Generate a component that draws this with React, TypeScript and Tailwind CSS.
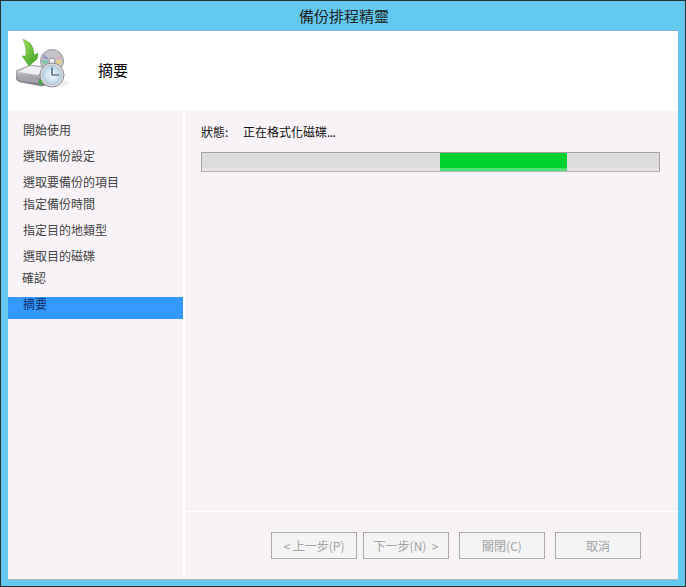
import React from 'react';

const font = { fontFamily: '"Noto Sans CJK TC", "Noto Sans", sans-serif' };

interface StepItem {
  label: string;
  rowClass: string;
}

const steps: StepItem[] = [
  { label: '開始使用', rowClass: 'mt-[11px] pl-[15px] leading-[16px]' },
  { label: '選取備份設定', rowClass: 'mt-[4px] pl-[15px] leading-[16px]' },
  { label: '選取要備份的項目', rowClass: 'mt-[4px] pl-[15px] leading-[16px]' },
  { label: '指定備份時間', rowClass: 'pl-[15px] leading-[16px]' },
  { label: '指定目的地類型', rowClass: 'mt-[4px] pl-[15px] leading-[16px]' },
  { label: '選取目的磁碟', rowClass: 'mt-[4px] pl-[15px] leading-[16px]' },
  { label: '確認', rowClass: 'pl-[14px] leading-[16px]' },
  { label: '摘要', rowClass: 'mt-[5px] pl-[15px] leading-[14px] bg-[#3399ff] text-[#0b2c66]' },
];

const BackupIcon = () => (
  <svg width="54" height="50" viewBox="0 0 54 50" className="shrink-0 self-start mt-[8px]">
    <defs>
      <linearGradient id="arrow" x1="0" y1="0" x2="1" y2="1">
        <stop offset="0" stopColor="#a6e05a" />
        <stop offset="1" stopColor="#2f9e22" />
      </linearGradient>
      <linearGradient id="drive" x1="0" y1="0" x2="0" y2="1">
        <stop offset="0" stopColor="#e6e4ea" />
        <stop offset="1" stopColor="#77757f" />
      </linearGradient>
      <radialGradient id="face" cx="0.5" cy="0.5" r="0.5">
        <stop offset="0" stopColor="#f4f9fc" />
        <stop offset="1" stopColor="#b9d3e4" />
      </radialGradient>
    </defs>
    <ellipse cx="38" cy="44" rx="15" ry="4" fill="#eeeeee" />
    <circle cx="36" cy="22" r="11.5" fill="#c4c3c8" stroke="#9a99a0" />
    <path d="M26 21 L32 21.5 L32.5 23.5 L27 26 Z" fill="#7fc8a8" />
    <path d="M28 15 L32.5 19.5 L31.5 20.5 L26.5 19.5 Z" fill="#9d97c8" />
    <path d="M46 21 L40 21.5 L39.5 23.5 L45 26 Z" fill="#e2d48c" />
    <path d="M44 15 L39.5 19.5 L40.5 20.5 L45.5 19.5 Z" fill="#d9abc4" />
    <circle cx="36" cy="22" r="3" fill="#f5f5f5" stroke="#8c8b92" />
    <path d="M0 32 L14 26 L30 28 L30 46 L26 47 L4 43 Q0 42 0 38 Z" fill="url(#drive)" stroke="#77767c" strokeWidth="0.6" />
    <path d="M2 33 L14 27.5 L28 29 L22 36 Z" fill="#efeef2" />
    <path d="M2 38 L22 41 L22 44 L4 41 Z" fill="#a8a6ae" />
    <rect x="23" y="40" width="3" height="5" fill="#3fb536" />
    <path d="M7 0 L14 4 Q18 9 18 16 L22 14 L21 20 L13 27 L6 17 L10 17 Q11 9 7 0 Z" fill="url(#arrow)" stroke="#4a9a2c" strokeWidth="0.5" />
    <circle cx="36" cy="36" r="12" fill="#dcdce0" stroke="#8d8d94" />
    <circle cx="36" cy="36" r="9.5" fill="url(#face)" stroke="#9fb2c0" strokeWidth="0.6" />
    <path d="M36 28.5 L36 36 L43 36" fill="none" stroke="#2e4a6e" strokeWidth="1.2" />
  </svg>
);

const WizardButton = ({ label }: { label: string }) => (
  <button
    disabled
    className="w-[86px] h-[27px] bg-[#f4f4f4] border border-[#adadad] text-[#a3a3a3] text-[12px] leading-none whitespace-pre flex items-center justify-center"
  >
    {label}
  </button>
);

export default function App() {
  return (
    <div style={font} className="w-[686px] h-[587px] bg-[#63c9f0] border border-[#2b2f33] flex flex-col overflow-hidden">
      <div className="h-[29px] shrink-0 flex items-center justify-center text-[15px] text-[#222] pt-[1px] pl-[2px]">
        備份排程精靈
      </div>
      <div className="flex-1 mx-[7px] mb-[6px] flex flex-col min-h-0 border-t border-b border-t-[#85b5d6] border-b-[#a9b4bd]">
        <div className="h-[80px] shrink-0 bg-white flex items-center pl-[8px]">
          <BackupIcon />
          <span className="ml-[28px] pb-[2px] text-[15px] text-black">摘要</span>
        </div>
        <div className="flex-1 flex min-h-0 bg-white">
          <div className="w-[175px] shrink-0 bg-[#f7f3f7] text-[12px] text-[#444]">
            {steps.map((step) => (
              <div key={step.label} className={`${step.rowClass} h-[22px]`}>
                {step.label}
              </div>
            ))}
          </div>
          <div className="flex-1 ml-[2px] bg-[#f7f3f7] flex flex-col">
            <div className="h-[400px] shrink-0 pl-[16px] pr-[18px] pt-[12px]">
              <div className="flex text-[12px] leading-[18px] text-[#111]">
                <span className="w-[42px]">狀態:</span>
                <span>
                  正在格式化磁碟<span className="tracking-[-0.6px]">...</span>
                </span>
              </div>
              <div className="mt-[11px] h-[20px] border border-[#a5a2a6] border-b-[#b8b5b9] bg-[linear-gradient(#dddbde_85%,#e6e3e7_85%)] flex">
                <div className="ml-[238px] w-[127px] bg-[linear-gradient(#00d32f_85%,#4fe06f_85%)]" />
              </div>
            </div>
            <div className="flex-1 border-t border-white flex items-start justify-end pt-[20px] pr-[37px]">
              <div className="flex gap-[6px] mr-[10px]">
                <WizardButton label="< 上一步(P)" />
                <WizardButton label="下一步(N)  >" />
              </div>
              <div className="flex gap-[10px]">
                <WizardButton label="關閉(C)" />
                <WizardButton label="取消" />
              </div>
            </div>
          </div>
        </div>
      </div>
    </div>
  );
}
